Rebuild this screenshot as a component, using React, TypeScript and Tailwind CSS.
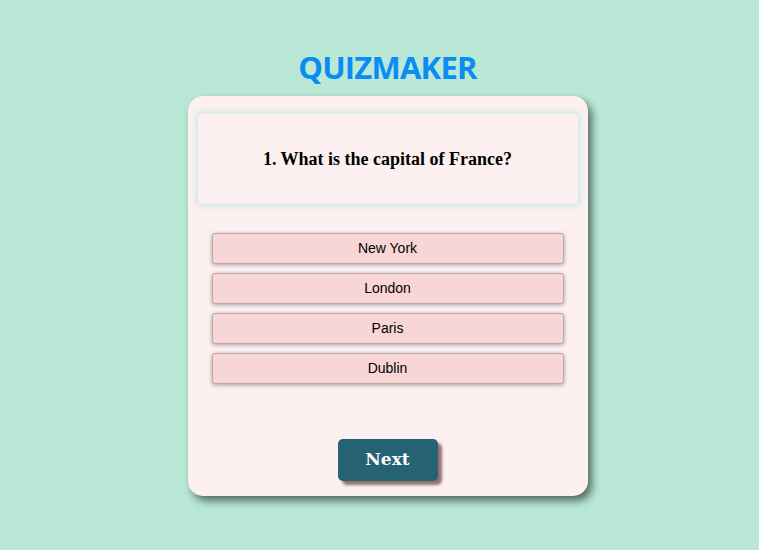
const options = ["New York", "London", "Paris", "Dublin"];

export default function App() {
  return (
    <div className="min-h-[550px] w-full bg-[#b9e9d6] flex flex-col items-center pt-[48px] pl-[16px]">
      <h1 className="text-[31px] leading-[38px] font-bold text-[#0a8cf5] font-['Open_Sans',sans-serif] tracking-tight">
        QUIZMAKER
      </h1>
      <div className="mt-[10px] w-[400px] h-[400px] rounded-[15px] bg-[#fdf0f0] shadow-[4px_5px_8px_rgba(0,0,0,0.55)] px-[10px] pt-[18px] flex flex-col">
        <div className="h-[90px] rounded-[4px] bg-[#fdf0f0] shadow-[0_0_5px_3px_rgba(210,232,236,0.9)] flex items-center justify-center">
          <h2 className="font-['Liberation_Serif',serif] font-bold text-[18px] text-black">
            1. What is the capital of France?
          </h2>
        </div>
        <div className="mt-[29px] px-[14px] flex flex-col gap-[9px]">
          {options.map((o) => (
            <button
              key={o}
              className="h-[31px] w-full rounded-[3px] bg-[#f8d6d6] border border-[#b9a9a9] shadow-[0_1px_4px_rgba(0,0,0,0.35)] font-['Liberation_Sans',sans-serif] text-[14px] text-black"
            >
              {o}
            </button>
          ))}
        </div>
        <div className="mt-[55px] flex justify-center">
          <button className="w-[100px] h-[42px] rounded-[5px] bg-[#256372] text-white font-['DejaVu_Serif',serif] font-bold text-[17px] shadow-[4px_4px_3px_rgba(110,70,70,0.75)]">
            Next
          </button>
        </div>
      </div>
    </div>
  );
}
